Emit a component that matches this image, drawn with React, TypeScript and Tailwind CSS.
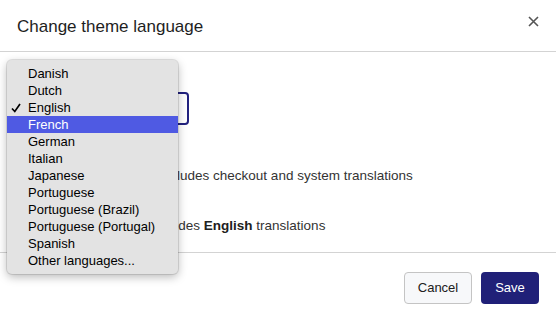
import React from "react";

const languages = [
  "Danish",
  "Dutch",
  "English",
  "French",
  "German",
  "Italian",
  "Japanese",
  "Portuguese",
  "Portuguese (Brazil)",
  "Portuguese (Portugal)",
  "Spanish",
  "Other languages...",
];

// native select popup, drawn over the dialog body
function SelectPopup() {
  return (
    <div className="absolute left-[7px] top-[60px] w-[171px] rounded-[5px] bg-[#e3e3e3] py-[5px] shadow-[0_3px_10px_rgba(0,0,0,0.28)] ring-1 ring-black/10">
      {languages.map((lang) => {
        const selected = lang === "English";
        const active = lang === "French";
        return (
          <div
            key={lang}
            className={`relative flex h-[17px] items-center pl-[21px] text-[13px] leading-none ${
              active ? "bg-[#4f5ae3] text-white" : "text-black"
            }`}
          >
            {selected && (
              <svg className="absolute left-[4px] top-[4px] h-[10px] w-[10px]" viewBox="0 0 10 10">
                <path d="M1 5.5 L3.8 8.5 L9 1" stroke="#000" strokeWidth="1.7" fill="none" />
              </svg>
            )}
            {lang}
          </div>
        );
      })}
    </div>
  );
}

function RadioOption({ label, children, checked }: { label: string; children: React.ReactNode; checked?: boolean }) {
  return (
    <label className="flex items-start gap-[15px]">
      <span
        className={`mt-[2px] h-4 w-4 rounded-full border ${
          checked ? "border-[5px] border-[#21217a]" : "border-[#8c8c8c]"
        }`}
      />
      <span className="flex flex-col">
        <span className="text-[13.5px] leading-[18px] text-[#202020]">{label}</span>
        <span className="text-[13.5px] leading-[18px] text-[#333]">{children}</span>
      </span>
    </label>
  );
}

export default function App() {
  return (
    <div
      className="relative flex h-[319px] w-[556px] flex-col overflow-hidden bg-white"
      style={{ fontFamily: '"Liberation Sans", Arial, sans-serif' }}
    >
      {/* Header */}
      <div className="flex h-[52px] items-center justify-between border-b border-[#d3d3d3] pl-[17px] pr-[13px]">
        <h2 className="mt-[3px] text-[17px] text-[#1e1e1e]">Change theme language</h2>
        <button className="mb-[8px] flex h-5 w-5 items-center justify-center">
          <svg className="h-[11px] w-[11px]" viewBox="0 0 11 11">
            <path d="M1 1 L10 10 M10 1 L1 10" stroke="#555" strokeWidth="1.6" />
          </svg>
        </button>
      </div>

      {/* Body */}
      <div className="flex flex-1 flex-col px-[17px] pt-[15px]">
        <span className="text-[13px] leading-[18px] text-[#202020]">Theme language</span>
        <div className="mt-[7px] flex h-[33px] w-[172px] items-center rounded-[4px] border-2 border-[#22227f] px-3 text-[13px] text-[#202020]">
          English
        </div>
        <div className="mt-[24px] flex flex-col gap-[14px]">
          <RadioOption label="Full translation" checked>
            Theme translation includes checkout and system translations
          </RadioOption>
          <RadioOption label="Basic">
            Theme text only, includes <b className="font-bold text-[#202020]">English</b> translations
          </RadioOption>
        </div>
      </div>

      {/* Footer */}
      <div className="flex h-[67px] items-start justify-end gap-[9px] border-t border-[#d3d3d3] pr-[17px] pt-[19px]">
        <button className="h-[32px] w-[68px] rounded-[4px] border border-[#c4c4c4] bg-[#f7f8fa] text-[13px] text-[#202020]">
          Cancel
        </button>
        <button className="h-[32px] w-[58px] rounded-[4px] bg-[#202078] text-[13px] text-white">
          Save
        </button>
      </div>

      <SelectPopup />
    </div>
  );
}
